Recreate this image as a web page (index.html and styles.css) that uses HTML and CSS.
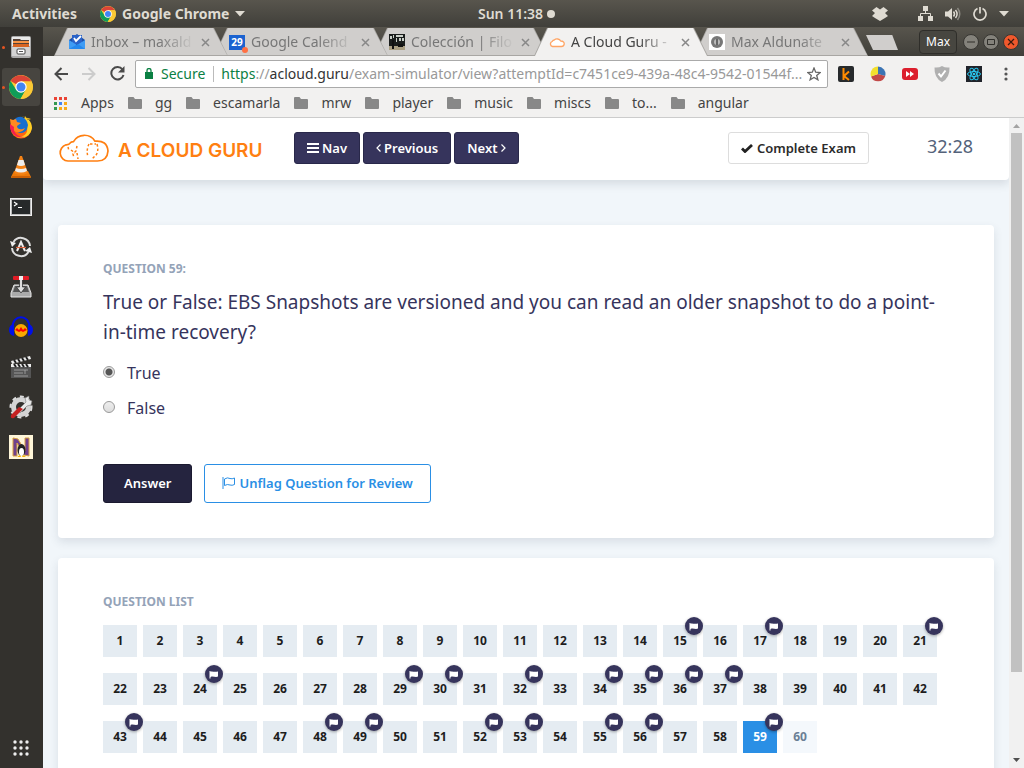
FILE: index.html
```html
<!DOCTYPE html>
<html lang="en">
<head>
<meta charset="utf-8">
<title>A Cloud Guru - Exam Simulator</title>
<link rel="stylesheet" href="styles.css">
</head>
<body>
<svg class="defs" aria-hidden="true">
  <symbol id="chrome" viewBox="0 0 24 24"><circle cx="12" cy="12" r="12" fill="#fbc935"/><path d="M12 12 1.6 6A12 12 0 0 1 22.4 6.500L12 6.500Z" fill="#db4437"/><path d="M1.600 6A12 12 0 0 0 11.500 24L17 14.500 12 12 7 14.500Z" fill="#0f9d58"/><path d="M22.500 6.500H12L17 14.500 11.500 24A12 12 0 0 0 22.500 6.500Z" fill="#fbc935"/><circle cx="12" cy="12" r="5.700" fill="#fff"/><circle cx="12" cy="12" r="4.500" fill="#4285f4"/></symbol>
  <symbol id="folder" viewBox="0 0 14 12"><path d="M1 0h4.500L7 2h6a1 1 0 0 1 1 1v8a1 1 0 0 1-1 1H1a1 1 0 0 1-1-1V1a1 1 0 0 1 1-1Z" fill="#888"/></symbol>
  <symbol id="close" viewBox="0 0 9 9"><path d="M1 1l7 7M8 1L1 8" stroke="#888" stroke-width="1.500"/></symbol>
  <symbol id="flag" viewBox="0 0 10 9"><path d="M.5 1h1v7.500h-1ZM1.500 1.800c2-1 3.500.8 7.500-.4v5.200C6 7.800 4.500 5.600 1.500 6.900Z" fill="#fff"/></symbol>
</svg>

<header class="topbar">
  <div class="topbar-left">
    <button class="sys activities">Activities</button>
    <button class="sys app"><svg width="16" height="16"><use href="#chrome"/></svg>Google Chrome<svg width="10" height="6" viewBox="0 0 10 6"><path d="M0 0h10L5 5.500Z" fill="currentColor"/></svg></button>
  </div>
  <button class="sys clock">Sun 11:38<span class="dot"></span></button>
  <div class="tray">
    <svg class="dropbox" width="16" height="14" viewBox="0 0 16 14"><path d="M4.500 0 8 2.500 11.500 0 16 3.500 13 6l3 3-3 2-5 3-5-3-3-2 3-3-3-2.500Z" fill="currentColor"/></svg>
    <svg class="net" width="15" height="15" viewBox="0 0 15 15"><path d="M5 0h5v5H5ZM0 10h5v5H0ZM10 10h5v5h-5Z" fill="currentColor"/><path d="M7.500 5v3M2.500 10V7.500h10V10" fill="none" stroke="currentColor"/></svg>
    <svg width="16" height="14" viewBox="0 0 16 14"><path d="M0 4.500h3L7 1v12L3 9.500H0Z" fill="currentColor"/><path d="M8.500 4.500q2 2.500 0 5M10.500 3q3.200 4 0 8" fill="none" stroke="currentColor" stroke-width="1.500"/><path d="M12.500 1q4.500 6 0 12" fill="none" stroke="#8b8982" stroke-width="1.500"/></svg>
    <svg width="14" height="14" viewBox="0 0 14 14"><path d="M4.500 1.600a6 6 0 1 0 5 0M7 0v6.500" fill="none" stroke="currentColor" stroke-width="1.700"/></svg>
    <svg class="caret" width="10" height="6" viewBox="0 0 10 6"><path d="M0 0h10L5 5.500Z" fill="currentColor"/></svg>
  </div>
</header>

<div class="desktop">
  <nav class="dock" aria-label="Dock">
    <button class="dock-item running" aria-label="Files"><svg width="22" height="24" viewBox="1 0 22 24"><rect x="2" y="1" width="20" height="22" rx="2" fill="#aaa"/><rect x="3" y="2" width="18" height="9" fill="#e9e9e9"/><path d="M4 4h7l1 1h8v7H4Z" fill="#554137"/><path d="M4 6h16v2H4Z" fill="#f79445"/><path d="M4 9h16v3H4Z" fill="#d76421"/><rect x="3" y="12" width="18" height="9" fill="#d3d3d3"/><rect x="8" y="14" width="8" height="5" rx="1" fill="#fff" stroke="#444"/><path d="M10 16h4v1h-4Z" fill="#555"/></svg></button>
    <button class="dock-item running active" aria-label="Google Chrome"><svg width="24" height="24"><use href="#chrome"/></svg></button>
    <button class="dock-item" aria-label="Firefox"><svg width="24" height="24" viewBox="0 0 24 24"><circle cx="12" cy="13" r="10.500" fill="#ff6611"/><path d="M12 1c6 1 11 5 11 12a11 11 0 0 1-15 9c8 0 11-4 10-9-1-4-5-6-5-9l2 1 1-4 3 4 3-1Z" fill="#ffcf25"/><path d="M4 6q4-5 9-4 5 2 6 8-1 8-7 8c-5 0-7-5-4-8L4 8Z" fill="#176fd0"/><path d="M1 4l3 1 3-1 1 3 4 1-4 3c0 4 5 4 8 2-2 5-10 6-14 0Z" fill="#ff8a20"/><path d="M1 9c-1 9 7 15 15 13-8 0-12-5-11-10Z" fill="#f51e50"/></svg></button>
    <button class="dock-item" aria-label="VLC"><svg width="22" height="24" viewBox="0 0 22 24"><path d="m4 16-3 6q0 1 1 1h18q1 0 1-1l-3-6Z" fill="#ed7908"/><path d="M10 1h2l6 17q-7 4-14 0Z" fill="#f58316"/><path d="m8.500 5-1.500 5q4 2 8 0l-1.500-5ZM6 13l-1 3q6 3 12 0l-1-3q-5 2-10 0Z" fill="#eee"/><path d="M2 22h18" stroke="#a84600"/></svg></button>
    <button class="dock-item" aria-label="Terminal"><svg width="22" height="18" viewBox="0 0 22 18"><rect x=".5" y=".5" width="21" height="17" fill="#bbb" stroke="#eee"/><rect x="2" y="2" width="18" height="14" fill="#26292a"/><path d="m4 4 3 2-3 2M8 9.500h4" fill="none" stroke="#fff" stroke-width="1.200"/></svg></button>
    <button class="dock-item" aria-label="Software Updater"><svg width="22" height="22" viewBox="0 0 22 22"><path d="M3.500 6a9 9 0 0 1 16.500 4M18.500 16A9 9 0 0 1 2 12" fill="none" stroke="#ddd" stroke-width="2"/><path d="m0 5 2 6 4-4ZM22 17l-2-6-5 4Z" fill="#eee"/><path d="m7 15 4-9 4 9" fill="none" stroke="#eee" stroke-width="2"/><path d="M6 11.500h10" stroke="#df6540" stroke-width="1.200"/></svg></button>
    <button class="dock-item" aria-label="Installer"><svg width="22" height="22" viewBox="0 0 22 22"><path d="M4 9h14l3 8v4H1v-4Z" fill="#aaa" stroke="#e7e7e7"/><path d="m5 10-2 6h16l-2-6Z" fill="#555"/><path d="M9.500 3h3v8h3L11 17l-4.500-6h3Z" fill="#ddd" stroke="#222" stroke-width=".7"/><rect x="3" y="0" width="16" height="4" rx="1" fill="#df1c26"/><rect x="9" y="0" width="4" height="4" fill="#eee"/></svg></button>
    <button class="dock-item" aria-label="Audacity"><svg width="24" height="22" viewBox="0 0 24 22"><circle cx="12" cy="14.500" r="6.500" fill="#f7a900"/><path d="M3.500 12C3-2.500 21-2.500 20.500 12" fill="none" stroke="#0010e8" stroke-width="2"/><path d="M5 8q-5 1-5 6t5 6ZM19 8q5 1 5 6t-5 6Z" fill="#0010e8"/><path d="m6 14 2-2 2 2 2-3 2 3 2-2 2 2-2 1-2 1-2-1-2 1-2-1Z" fill="#f00"/></svg></button>
    <button class="dock-item" aria-label="Video editor"><svg width="22" height="24" viewBox="0 0 22 24"><path d="m1 6 19-5 1 3L2 9Z" fill="#eee"/><path d="m4 5 2 3m2-4 2 3m2-4 2 3m2-4 2 3" stroke="#222" stroke-width="2"/><rect x="1" y="9" width="20" height="14" fill="#555"/><path d="M1 9h20v3H1Z" fill="#eee"/><path d="m4 9 2 3m2-3 2 3m2-3 2 3m2-3 2 3" stroke="#222" stroke-width="2"/><path d="M4 15h14M4 18h9m2-3v4M4 21h14" stroke="#aaa" stroke-width=".8"/></svg></button>
    <button class="dock-item" aria-label="Tweaks"><svg width="24" height="24" viewBox="0 0 24 24"><circle cx="12" cy="12" r="7.500" fill="none" stroke="#d4d4d4" stroke-width="5"/><circle cx="12" cy="12" r="10.500" fill="none" stroke="#ddd" stroke-width="2" stroke-dasharray="4 4"/><path d="m9 15 8-8-1-4 4-2v4l3 1-1 4-4 1-7 7Z" fill="#e8e8e8" stroke="#777" stroke-width=".6"/><path d="M2 20 10 12l4 2-9 9q-4 1-3-3Z" fill="#c42121"/></svg></button>
    <button class="dock-item" aria-label="Penguin app"><svg width="24" height="24" viewBox="0 0 24 24"><path d="M0 0h24v24H0Z" fill="#fff6d9"/><path d="M4 21V3l5 1 7 12V3h4v18l-5-1L8 8v13Z" fill="#70408d" stroke="#d8a040"/><ellipse cx="12.500" cy="15" rx="4" ry="6" fill="#222"/><ellipse cx="12.500" cy="17" rx="2.500" ry="4" fill="#fff"/><path d="M8 22l3-2 1 2Zm5 0 1-2 3 2Z" fill="#f3b000"/></svg></button>
    <button class="dock-item apps" aria-label="Show applications"><svg width="16" height="16" viewBox="0 0 16 16" fill="#eee"><circle cx="2" cy="2" r="1.700"/><circle cx="8" cy="2" r="1.700"/><circle cx="14" cy="2" r="1.700"/><circle cx="2" cy="8" r="1.700"/><circle cx="8" cy="8" r="1.700"/><circle cx="14" cy="8" r="1.700"/><circle cx="2" cy="14" r="1.700"/><circle cx="8" cy="14" r="1.700"/><circle cx="14" cy="14" r="1.700"/></svg></button>
  </nav>

  <div class="browser">
    <div class="tabstrip">
      <div class="tab z4"><svg width="16" height="16" viewBox="0 0 16 16"><path d="M0 6 8 0l8 6v9H0Z" fill="#1b4fa8"/><path d="M3 1h10v9H3Z" fill="#2a62c8"/><path d="m5 4 2 3 5-5" fill="none" stroke="#fff" stroke-width="1.800"/><path d="m0 6 8 5 8-5v9H0Z" fill="#3f9cf5"/><path d="m0 15 9-5 7 5Z" fill="#2588ed"/></svg><a href="#inbox">Inbox – maxald</a><button aria-label="Close tab"><svg width="9" height="9"><use href="#close"/></svg></button></div>
      <div class="tab z3"><span class="cal">29</span><a href="#calendar">Google Calend</a><button aria-label="Close tab"><svg width="9" height="9"><use href="#close"/></svg></button></div>
      <div class="tab z2"><svg width="16" height="16" viewBox="0 0 16 16"><path d="M0 0h16v16H0Z" fill="#1a1d1c"/><path d="M1 2h2v3H1Zm3-1h1v3H4Zm3 0h7v2H7Zm0 3h1v4H7Zm3 0h2v3h-2Zm3 0h2v3h-2Z" fill="#c9cfc8"/><path d="M0 12h16v4H0Z" fill="#aa9f83"/><path d="M3 6h2v9H3Zm6 4h5v3H9Z" fill="#111"/></svg><a href="#coleccion">Colección | Filo</a><button aria-label="Close tab"><svg width="9" height="9"><use href="#close"/></svg></button></div>
      <div class="tab current"><svg width="16" height="16" viewBox="0 0 16 16"><path d="M3.500 12.500a2.600 2.600 0 0 1-.3-5q.8-1.500 2-1.500a4 3.500 0 0 1 6.500 1q3.800.3 3.500 3.200-.4 2.300-2.700 2.300Z" fill="#fff" stroke="#ffa565" stroke-width="1.300"/></svg><a href="#guru">A Cloud Guru -</a><button aria-label="Close tab"><svg width="9" height="9"><use href="#close"/></svg></button></div>
      <div class="tab"><svg width="16" height="16" viewBox="0 0 16 16"><path d="M0 0h16v16H0Z" fill="#fff"/><circle cx="8" cy="8" r="6" fill="#777"/><circle cx="8" cy="8" r="3" fill="#bbb"/><path d="M7 5h2v6H7Z" fill="#666"/></svg><a href="#max">Max Aldunate</a><button aria-label="Close tab"><svg width="9" height="9"><use href="#close"/></svg></button></div>
      <button class="newtab" aria-label="New tab"></button>
      <div class="winctl">
        <button class="profile">Max</button>
        <button class="round" aria-label="Minimize"><svg width="8" height="8" viewBox="0 0 8 8"><path d="M0 4h8" stroke="#302f2b"/></svg></button>
        <button class="round" aria-label="Maximize"><svg width="8" height="8" viewBox="0 0 8 8"><path d="M.5 1.500h7v5h-7Z" fill="none" stroke="#302f2b"/></svg></button>
        <button class="round quit" aria-label="Close"><svg width="8" height="8" viewBox="0 0 8 8"><path d="m1 1 6 6m0-6L1 7" stroke="#3a1a0e" stroke-width="1.200"/></svg></button>
      </div>
    </div>

    <div class="toolbar">
      <button aria-label="Back"><svg width="14" height="14" viewBox="0 0 14 14"><path d="M14 7H2m5.500-6L1.500 7l6 6" fill="none" stroke="#4a4a4a" stroke-width="2"/></svg></button>
      <button aria-label="Forward"><svg width="14" height="14" viewBox="0 0 14 14"><path d="M0 7h12M6.500 1l6 6-6 6" fill="none" stroke="#ccc" stroke-width="2"/></svg></button>
      <button aria-label="Reload"><svg width="15" height="15" viewBox="0 0 15 15"><path d="M12.500 3.500A6.200 6.200 0 1 0 13.500 9" fill="none" stroke="#4a4a4a" stroke-width="2"/><path d="M14.500 0v6.500H8Z" fill="#4a4a4a"/></svg></button>
      <div class="omnibox">
        <svg width="8" height="11" viewBox="0 0 8 11"><path d="M0 4h8v7H0Z" fill="#0b8043"/><path d="M2 4.500V2.500a2 2 0 0 1 4 0v2" fill="none" stroke="#0b8043" stroke-width="1.300"/></svg>
        <span class="secure">Secure</span>
        <span class="url"><i>https</i>://<b>acloud.guru</b>/exam-simulator/view?attemptId=c7451ce9-439a-48c4-9542-01544f...</span>
        <button aria-label="Bookmark this page"><svg width="14" height="14" viewBox="0 0 14 14"><path d="m7 1 1.700 4.200 4.500.3-3.500 2.900 1.200 4.400L7 10.400l-3.900 2.400 1.200-4.400L.8 5.500l4.500-.3Z" fill="none" stroke="#666" stroke-width="1.300"/></svg></button>
      </div>
      <div class="extensions">
        <button aria-label="Kindle extension"><svg width="16" height="16" viewBox="0 0 16 16"><rect width="16" height="16" rx="2" fill="#272a2c"/><path d="M5.500 2v12M11 5.500 6 10l5 4" fill="none" stroke="#ff8b00" stroke-width="2"/></svg></button>
        <button aria-label="Color wheel"><svg width="16" height="16" viewBox="0 0 16 16"><path d="M8 8V.5A7.500 7.500 0 0 1 15.200 10Z" fill="#3b74b4"/><path d="M8 8 15.200 10A7.500 7.500 0 0 1 1 10.500Z" fill="#c24848"/><path d="M8 8 1 10.500A7.500 7.500 0 0 1 8 .5Z" fill="#f2de2e"/></svg></button>
        <button aria-label="Video speed"><svg width="16" height="12" viewBox="0 0 16 12"><rect width="16" height="12" rx="3" fill="#dc1f2d"/><path d="m4 3 4 3-4 3Zm4 0 4 3-4 3Z" fill="#fff"/></svg></button>
        <button aria-label="Shield"><svg width="16" height="16" viewBox="0 0 16 16"><path d="M8 0q3 2 7.500 1.500Q16 12 8 16 0 12 .5 1.500 5 2 8 0Z" fill="#b0b0b0"/><path d="m4.500 7.500 2.500 3 4.500-6" fill="none" stroke="#fff" stroke-width="2"/></svg></button>
        <button aria-label="React tools"><svg width="16" height="16" viewBox="0 0 16 16"><path d="M0 0h16v16H0Z" fill="#20232a"/><g fill="none" stroke="#29c5ee"><ellipse cx="8" cy="8" rx="6.500" ry="2.500"/><ellipse cx="8" cy="8" rx="6.500" ry="2.500" transform="rotate(60 8 8)"/><ellipse cx="8" cy="8" rx="6.500" ry="2.500" transform="rotate(120 8 8)"/></g><circle cx="8" cy="8" r="1.300" fill="#29c5ee"/></svg></button>
        <button aria-label="Menu"><svg width="4" height="14" viewBox="0 0 4 14" fill="#555"><circle cx="2" cy="2" r="1.600"/><circle cx="2" cy="7" r="1.600"/><circle cx="2" cy="12" r="1.600"/></svg></button>
      </div>
    </div>

    <nav class="bookmarks" aria-label="Bookmarks">
      <a href="#apps"><svg width="14" height="13" viewBox="0 0 14 13"><path d="M0 0h3v3H0Zm5 0h3v3H5Zm5 0h3v3h-3Z" fill="#ea4335"/><path d="M0 5h3v3H0Zm0 5h3v3H0Z" fill="#34984f"/><path d="M5 5h3v3H5Z" fill="#4285f4"/><path d="M10 5h3v3h-3ZM5 10h3v3H5Zm5 0h3v3h-3Z" fill="#f9ab19"/></svg>Apps</a>
      <a href="#gg"><svg width="14" height="12"><use href="#folder"/></svg>gg</a>
      <a href="#escamarla"><svg width="14" height="12"><use href="#folder"/></svg>escamarla</a>
      <a href="#mrw"><svg width="14" height="12"><use href="#folder"/></svg>mrw</a>
      <a href="#player"><svg width="14" height="12"><use href="#folder"/></svg>player</a>
      <a href="#music"><svg width="14" height="12"><use href="#folder"/></svg>music</a>
      <a href="#miscs"><svg width="14" height="12"><use href="#folder"/></svg>miscs</a>
      <a href="#to"><svg width="14" height="12"><use href="#folder"/></svg>to...</a>
      <a href="#angular"><svg width="14" height="12"><use href="#folder"/></svg>angular</a>
    </nav>

    <div class="viewport">
      <div class="page">
        <header class="site-head">
          <a class="logo" href="#home"><svg width="50" height="28" viewBox="0 0 50 28" fill="none" stroke="#ff7f11"><path d="M9 27A8.300 8.300 0 0 1 7 10.800Q10 11 12 8.300q1.300-.8 2.500-.7A12.500 12.500 0 0 1 36 7.200Q48 6 49 17q-.7 10-10.500 10Z" stroke-width="1.700"/><path d="M9 13l1 4m2-1 4 3m2-7-1 5-3 3 1 4m3-5 1 6M30 10q-3 6-1 13m9-13q2 7-1 11l-4 4M31 10h6" stroke-width="1.500" stroke-dasharray="2.500 2"/></svg><span>A CLOUD GURU</span></a>
          <div class="nav-buttons">
            <button class="btn navy"><svg width="12" height="10" viewBox="0 0 12 10"><path d="M0 1h12M0 5h12M0 9h12" stroke="#fff" stroke-width="2"/></svg>Nav</button>
            <button class="btn navy"><svg width="5" height="8" viewBox="0 0 5 8"><path d="M4.500.5 1 4l3.500 3.500" fill="none" stroke="#fff" stroke-width="1.200"/></svg>Previous</button>
            <button class="btn navy">Next<svg width="5" height="8" viewBox="0 0 5 8"><path d="M.5.5 4 4 .5 7.500" fill="none" stroke="#fff" stroke-width="1.200"/></svg></button>
          </div>
          <button class="btn complete"><svg width="12" height="9" viewBox="0 0 12 9"><path d="m1 4.500 3 3L11 1" fill="none" stroke="#222" stroke-width="2.800"/></svg>Complete Exam</button>
          <time class="timer">32:28</time>
        </header>

        <main>
          <section class="card question">
            <h2>QUESTION 59:</h2>
            <p class="prompt">True or False: EBS Snapshots are versioned and you can read an older snapshot to do a point-in-time recovery?</p>
            <div class="choices">
              <label><input type="radio" name="answer" checked>True</label>
              <label><input type="radio" name="answer">False</label>
            </div>
            <div class="actions">
              <button class="btn answer">Answer</button>
              <button class="btn unflag"><svg width="13" height="12" viewBox="0 0 13 12"><path d="M1 0v12M2.500 2q3-2 5.500-.5 2 .8 4.500-.5v6.500Q10 8.800 8 8 5.500 6.800 2.500 8.500Z" fill="none" stroke="#2a8fe5"/></svg>Unflag Question for Review</button>
            </div>
          </section>

          <section class="card">
            <h2>QUESTION LIST</h2>
            <div class="cells">
              <button>1</button><button>2</button><button>3</button><button>4</button><button>5</button><button>6</button><button>7</button><button>8</button><button>9</button><button>10</button><button>11</button><button>12</button><button>13</button><button>14</button>
              <button>15<span class="flag"><svg width="10" height="9"><use href="#flag"/></svg></span></button>
              <button>16</button>
              <button>17<span class="flag"><svg width="10" height="9"><use href="#flag"/></svg></span></button>
              <button>18</button><button>19</button><button>20</button>
              <button>21<span class="flag"><svg width="10" height="9"><use href="#flag"/></svg></span></button>
              <button>22</button><button>23</button>
              <button>24<span class="flag"><svg width="10" height="9"><use href="#flag"/></svg></span></button>
              <button>25</button><button>26</button><button>27</button><button>28</button>
              <button>29<span class="flag"><svg width="10" height="9"><use href="#flag"/></svg></span></button>
              <button>30<span class="flag"><svg width="10" height="9"><use href="#flag"/></svg></span></button>
              <button>31</button>
              <button>32<span class="flag"><svg width="10" height="9"><use href="#flag"/></svg></span></button>
              <button>33</button>
              <button>34<span class="flag"><svg width="10" height="9"><use href="#flag"/></svg></span></button>
              <button>35<span class="flag"><svg width="10" height="9"><use href="#flag"/></svg></span></button>
              <button>36<span class="flag"><svg width="10" height="9"><use href="#flag"/></svg></span></button>
              <button>37<span class="flag"><svg width="10" height="9"><use href="#flag"/></svg></span></button>
              <button>38</button><button>39</button><button>40</button><button>41</button><button>42</button>
              <button>43<span class="flag"><svg width="10" height="9"><use href="#flag"/></svg></span></button>
              <button>44</button><button>45</button><button>46</button><button>47</button>
              <button>48<span class="flag"><svg width="10" height="9"><use href="#flag"/></svg></span></button>
              <button>49<span class="flag"><svg width="10" height="9"><use href="#flag"/></svg></span></button>
              <button>50</button><button>51</button>
              <button>52<span class="flag"><svg width="10" height="9"><use href="#flag"/></svg></span></button>
              <button>53<span class="flag"><svg width="10" height="9"><use href="#flag"/></svg></span></button>
              <button>54</button>
              <button>55<span class="flag"><svg width="10" height="9"><use href="#flag"/></svg></span></button>
              <button>56<span class="flag"><svg width="10" height="9"><use href="#flag"/></svg></span></button>
              <button>57</button><button>58</button>
              <button class="here">59<span class="flag"><svg width="10" height="9"><use href="#flag"/></svg></span></button>
              <button class="unseen">60</button>
            </div>
          </section>
        </main>
      </div>
      <div class="scrollbar" aria-hidden="true">
        <svg width="15" height="15" viewBox="0 0 15 15"><path d="M4 10h7L7.500 6Z" fill="#a3a3a3"/></svg>
        <div class="track"><div class="thumb"></div></div>
        <svg width="15" height="15" viewBox="0 0 15 15"><path d="M4 5h7L7.500 9Z" fill="#505050"/></svg>
      </div>
    </div>
  </div>
</div>
</body>
</html>
```
FILE: styles.css
```css
* { box-sizing: border-box; }
body {
  margin: 0;
  height: 100vh;
  display: flex;
  flex-direction: column;
  overflow: hidden;
  font-family: "Noto Sans", "Open Sans", sans-serif;
  font-size: 14px;
}
button { font: inherit; color: inherit; border: 0; padding: 0; background: none; }
a { color: inherit; text-decoration: none; }
svg { display: block; flex: none; }
.defs { position: absolute; width: 0; height: 0; }

/* system bar */
.topbar {
  flex: none;
  height: 27px;
  display: grid;
  grid-template-columns: 1fr auto 1fr;
  align-items: center;
  padding: 0 15px 0 12px;
  background: linear-gradient(#58554d, #403f3a);
  color: #dfdbd2;
}
.topbar-left { display: flex; gap: 20px; }
.sys { font-weight: 700; font-size: 14px; line-height: 20px; white-space: nowrap; }
.activities { min-width: 68px; text-align: left; }
.app { display: flex; align-items: center; gap: 6px; }
.clock { display: flex; align-items: center; gap: 4px; margin-left: 12px; font-weight: 600; }
.dot { width: 8px; height: 8px; border-radius: 50%; background: currentColor; }
.tray { display: flex; align-items: center; justify-content: flex-end; gap: 12px; }
.dropbox { margin-right: 18px; }

.desktop { flex: 1; min-height: 0; display: flex; }

/* dock */
.dock {
  flex: none;
  width: 43px;
  display: flex;
  flex-direction: column;
  align-items: center;
  gap: 2px;
  padding: 1px 1px 0 0;
  background: #33312d;
}
.dock-item {
  position: relative;
  width: 38px;
  height: 38px;
  border-radius: 3px;
  display: grid;
  place-items: center;
}
.dock-item.active { background: #474540; }
.dock-item.running::before {
  content: "";
  position: absolute;
  left: 0;
  top: 18px;
  width: 3px;
  height: 3px;
  border-radius: 50%;
  background: #e95420;
}
.apps { margin-top: auto; margin-bottom: 1px; }

/* browser chrome */
.browser { flex: 1; min-width: 0; display: flex; flex-direction: column; background: #f2f1f0; }
.tabstrip {
  flex: none;
  height: 29px;
  display: flex;
  align-items: flex-end;
  padding: 0 5px 0 11px;
  background: linear-gradient(#58554d, #403f3a);
}
.tab {
  position: relative;
  z-index: 1;
  isolation: isolate;
  flex: 0 1 174px;
  min-width: 0;
  height: 28px;
  margin-right: -14px;
  padding: 0 18px 0 15px;
  display: flex;
  align-items: center;
  color: #777;
}
.tab::before, .tab::after {
  content: "";
  position: absolute;
  z-index: -1;
  inset: 0;
  background: #a8a6a3;
  clip-path: polygon(0 100%, 13px 0, calc(100% - 14px) 0, 100% 100%);
}
.tab::after { inset: 0 1px 1px; background: #d0cecc; }
.z4 { z-index: 4; }
.z3 { z-index: 3; }
.z2 { z-index: 2; }
.tab.current { z-index: 5; color: #444; }
.tab.current::after { inset: 0 1px 0; background: #f2f1f0; }
.tab a {
  flex: 1;
  margin: 0 6px;
  overflow: hidden;
  white-space: nowrap;
  line-height: 20px;
  mask-image: linear-gradient(90deg, #000 65%, transparent);
}
.cal {
  flex: none;
  position: relative;
  width: 16px;
  height: 15px;
  background: #1a62d0;
  color: #fff;
  font-size: 10px;
  font-weight: 700;
  line-height: 15px;
  text-align: center;
}
.cal::after {
  content: "";
  position: absolute;
  right: -3px;
  bottom: -3px;
  width: 6px;
  height: 6px;
  border-radius: 50%;
  background: #ff7043;
}
.newtab {
  width: 32px;
  height: 15px;
  margin: 0 0 6px 12px;
  background: #d0cecc;
  clip-path: polygon(0 0, 82% 0, 100% 100%, 22% 100%);
}
.winctl { margin-left: auto; height: 28px; display: flex; align-items: center; gap: 4px; }
.profile {
  height: 24px;
  padding: 0 6px;
  margin-right: 2px;
  border: 1px solid #2f2e2a;
  border-radius: 4px;
  background: #474640;
  color: #fff;
  font-size: 12px;
  line-height: 20px;
}
.round {
  width: 16px;
  height: 16px;
  border: 1px solid #373632;
  border-radius: 50%;
  background: #84827b;
  display: grid;
  place-items: center;
}
.quit { background: #f0582c; }

.toolbar {
  flex: none;
  height: 35px;
  display: flex;
  align-items: center;
  gap: 14px;
  padding: 0 16px 0 11px;
}
.omnibox {
  flex: 1;
  min-width: 0;
  height: 28px;
  margin-left: -4px;
  padding: 0 6px 0 9px;
  display: flex;
  align-items: center;
  border: 1px solid #aaa;
  border-radius: 2px;
  background: #fff;
  font-size: 14px;
}
.secure {
  margin: 0 7px 0 8px;
  padding-right: 8px;
  border-right: 1px solid #bbb;
  line-height: 16px;
  color: #0b8043;
}
.url {
  flex: 1;
  min-width: 0;
  overflow: hidden;
  text-overflow: ellipsis;
  white-space: nowrap;
  color: #999;
}
.url i { font-style: normal; color: #0b8043; }
.url b { font-weight: 400; color: #333; }
.extensions { display: flex; align-items: center; gap: 16px; margin-left: -4px; }
.extensions button:last-child { margin-left: 6px; }

.bookmarks {
  flex: none;
  height: 27px;
  display: flex;
  align-items: center;
  gap: 14px;
  padding: 0 11px 2px;
  border-bottom: 1px solid #ccc;
  color: #444;
  font-size: 14px;
  line-height: 20px;
}
.bookmarks a { display: flex; align-items: center; gap: 13px; }

/* page */
.viewport { flex: 1; min-height: 0; display: flex; background: #f1f6fa; }
.page { flex: 1; min-width: 0; overflow: hidden; }
.site-head {
  height: 62px;
  display: flex;
  align-items: center;
  padding: 0 36px 2px 16px;
  background: #fff;
  border-radius: 0 0 4px 4px;
  box-shadow: 0 4px 10px rgba(40, 55, 80, .14);
}
.logo {
  display: flex;
  align-items: center;
  gap: 9px;
  width: 235px;
  color: #ff7f11;
  font-family: Inter, "Noto Sans", sans-serif;
  font-size: 19px;
  font-weight: 600;
  white-space: nowrap;
}
.logo span { padding-top: 5px; }
.nav-buttons { display: flex; gap: 3px; }
.btn {
  display: flex;
  align-items: center;
  justify-content: center;
  gap: 3px;
  height: 32px;
  padding: 0 12px;
  border: 1px solid;
  border-radius: 3px;
  font-size: 13px;
  font-weight: 600;
  white-space: nowrap;
}
.navy { background: #36345c; border-color: #29284a; color: #fff; }
.complete { margin-left: auto; gap: 4px; background: #fff; border-color: #ddd; color: #2b2b2b; }
.timer { margin-left: 58px; padding-bottom: 4px; color: #54627a; font-size: 18px; line-height: 24px; }

main { display: flex; flex-direction: column; gap: 20px; padding: 45px 15px 0; }
.card {
  padding: 35px 45px;
  background: #fff;
  border-radius: 4px;
  box-shadow: 0 4px 10px rgba(40, 55, 80, .12);
}
.card h2 { margin: 0; color: #94a3b8; font-size: 12px; font-weight: 700; line-height: 17px; }
.prompt { margin: 10px 0 9px; color: #36345c; font-size: 19px; line-height: 30px; }
.choices { display: flex; flex-direction: column; color: #36345c; font-size: 16px; line-height: 35px; }
.choices label { display: flex; align-items: center; }
.choices input {
  appearance: none;
  width: 12px;
  height: 12px;
  margin: 0 12px 4px 0;
  border: 1px solid #999;
  border-radius: 50%;
  background: linear-gradient(#eee, #ddd);
}
.choices input:checked { background: radial-gradient(circle, #555 3px, #e5e5e5 4px); }
.actions { display: flex; gap: 12px; padding-top: 38px; }
.answer, .unflag { height: 39px; padding: 0 17px 1px; }
.answer { padding: 0 20px 1px; background: #25243f; border-color: #1b1a30; color: #fff; }
.unflag { gap: 4px; background: #fff; border-color: #2a8fe5; color: #2a8fe5; }

.cells { display: flex; flex-wrap: wrap; gap: 16px 6px; padding-top: 15px; }
.cells button {
  position: relative;
  width: 34px;
  height: 32px;
  padding-bottom: 2px;
  background: #e5ecf2;
  color: #1d1d1d;
  font-size: 12px;
  font-weight: 700;
}
.cells .here { background: #2a8fe5; color: #fff; }
.cells .unseen { background: #f4f8fc; color: #6b7f95; }
.flag {
  position: absolute;
  top: -8px;
  right: -6px;
  width: 18px;
  height: 18px;
  border-radius: 50%;
  display: grid;
  place-items: center;
  background: #36345c;
  box-shadow: 0 1px 3px rgba(0, 0, 0, .35);
}

.scrollbar { flex: none; width: 15px; display: flex; flex-direction: column; background: #f1f1f1; }
.track { flex: 1; padding: 0 2px; }
.thumb { height: 87%; background: #c1c1c1; }
```
